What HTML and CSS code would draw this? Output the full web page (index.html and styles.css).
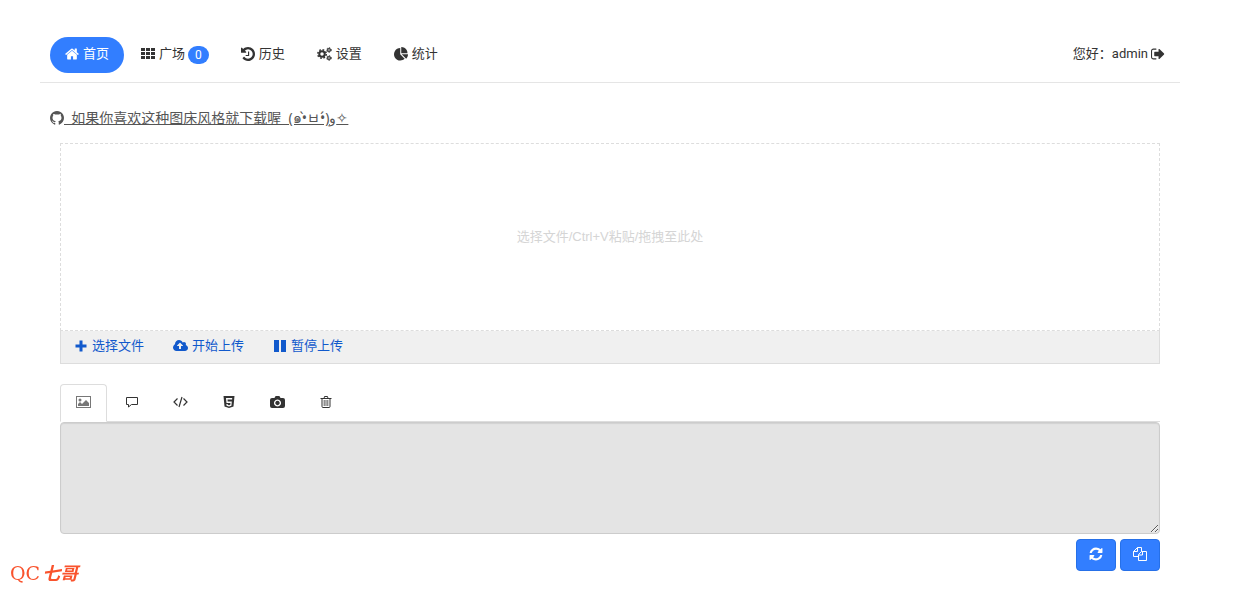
FILE: index.html
```
<!DOCTYPE html>
<html lang="zh-CN">
<head>
    <meta charset="UTF-8">
    <meta name="viewport" content="width=device-width, initial-scale=1.0">
    <title>首页</title>
    <link rel="stylesheet" href="styles.css">
</head>
<body>
    <div class="container">
        <!-- 顶部导航 -->
        <header class="header">
            <nav class="nav">
                <a class="nav-link active" href="#">
                    <svg class="icon" viewBox="64 64 1664 1664"><path d="M1472 992v480q0 26-19 45t-45 19h-384v-384h-256v384h-384q-26 0-45-19t-19-45v-480q0-1 .5-3t.5-3l575-474 575 474q1 2 1 6zm223-69l-62 74q-8 9-21 11h-3q-13 0-21-7l-692-577-692 577q-12 8-24 7-13-2-21-11l-62-74q-8-10-7-23.500t11-21.500l719-599q32-26 76-26t76 26l244 204v-195q0-14 9-23t23-9h192q14 0 23 9t9 23v408l219 182q10 8 11 21.500t-7 23.500z"/></svg>
                    <span>首页</span>
                </a>
                <a class="nav-link" href="#">
                    <svg class="icon" viewBox="0 0 14 14"><path d="M0 1h4v3H0zM5 1h4v3H5zM10 1h4v3h-4zM0 5h4v3H0zM5 5h4v3H5zM10 5h4v3h-4zM0 9h4v3H0zM5 9h4v3H5zM10 9h4v3h-4z"/></svg>
                    <span>广场</span>
                    <span class="badge">0</span>
                </a>
                <a class="nav-link" href="#">
                    <svg class="icon" viewBox="128 128 1536 1536"><path d="M1664 896q0 156-61 298t-164 245-245 164-298 61q-172 0-327-72.500t-264-204.500q-7-10-6.500-22.500t8.500-20.500l137-138q10-9 25-9 16 2 23 12 73 95 179 147t225 52q104 0 198.500-40.500t163.500-109.500 109.500-163.500 40.500-198.500-40.500-198.500-109.500-163.500-163.500-109.500-198.500-40.500q-98 0-188 35.500t-160 101.500l137 138q31 30 14 69-17 40-59 40h-448q-26 0-45-19t-19-45v-448q0-42 40-59 39-17 69 14l130 129q107-101 244.500-156.500t284.500-55.500q156 0 298 61t245 164 164 245 61 298z"/><path d="M1024 640v448q0 14-9 23t-23 9h-320q-14 0-23-9t-9-23v-64q0-14 9-23t23-9h224v-352q0-14 9-23t23-9h64q14 0 23 9t9 23z"/></svg>
                    <span>历史</span>
                </a>
                <a class="nav-link" href="#">
                    <svg class="icon icon-wide" viewBox="0 0 30 28">
                        <g fill="none" stroke="currentColor">
                            <circle cx="10" cy="14" r="5.500" stroke-width="4"/>
                            <circle cx="10" cy="14" r="8.500" stroke-width="3" stroke-dasharray="3.500 3.176"/>
                            <circle cx="24" cy="6" r="2.800" stroke-width="2.500"/>
                            <circle cx="24" cy="6" r="4.600" stroke-width="2" stroke-dasharray="2.600 2.217"/>
                            <circle cx="24" cy="22" r="2.800" stroke-width="2.500"/>
                            <circle cx="24" cy="22" r="4.600" stroke-width="2" stroke-dasharray="2.600 2.217"/>
                        </g>
                    </svg>
                    <span>设置</span>
                </a>
                <a class="nav-link" href="#">
                    <svg class="icon" viewBox="0 0 1728 1728"><path d="M768 890l546 546q-106 108-247.500 168t-298.500 60q-209 0-385.500-103t-279.500-279.500-103-385.500 103-385.500 279.500-279.500 385.500-103v762zm187 6h773q0 157-60 298.500t-168 247.500zm709-128h-768v-768q209 0 385.500 103t279.500 279.500 103 385.500z"/></svg>
                    <span>统计</span>
                </a>
            </nav>
            <a class="nav-link" href="#">
                <span>您好：admin</span>
                <svg class="icon" viewBox="64 64 1664 1664"><path d="M704 1440q0 4 1 20t.5 26.500-3 23.500-10 19.500-20.500 6.500h-320q-119 0-203.500-84.500t-84.500-203.500v-704q0-119 84.500-203.500t203.500-84.500h320q13 0 22.500 9.500t9.500 22.500q0 4 1 20t.5 26.500-3 23.500-10 19.500-20.500 6.500h-320q-66 0-113 47t-47 113v704q0 66 47 113t113 47h312l11.500 1 11.500 3 8 5.500 7 9 2 13.500zm928-544q0 26-19 45l-544 544q-19 19-45 19t-45-19-19-45v-288h-448q-26 0-45-19t-19-45v-384q0-26 19-45t45-19h448v-288q0-26 19-45t45-19 45 19l544 544q19 19 19 45z"/></svg>
            </a>
        </header>

        <p class="notice">
            <a href="#"><svg class="icon" viewBox="128 128 1536 1536"><path d="M896 128q209 0 385.500 103t279.500 279.500 103 385.500q0 251-146.500 451.500t-378.500 277.500q-27 5-40-7t-13-30q0-3 .5-76.500t.5-134.500q0-97-52-142 57-6 102.500-18t94-39 81-66.500 53-105 20.500-150.500q0-119-79-206 37-91-8-204-28-9-81 11t-92 44l-38 24q-93-26-192-26t-192 26q-16-11-42.500-27t-83.500-38.500-85-13.500q-45 113-8 204-79 87-79 206 0 85 20.500 150t52.500 105 80.500 67 94 39 102.500 18q-39 36-49 103-21 10-45 15t-57 5-65.500-21.500-55.500-62.500q-19-32-48.500-52t-49.500-24l-20-3q-21 0-29 4.500t-5 11.500 9 14 13 12l7 5q22 10 43.500 38t31.500 51l10 23q13 38 44 61.500t67 30 69.500 7 55.500-3.500l23-4q0 38 .5 88.500t.5 54.500q0 18-13 30t-40 7q-232-77-378.500-277.500t-146.500-451.500q0-209 103-385.500t279.500-279.500 385.500-103z"/></svg>&nbsp;&nbsp;如果你喜欢这种图床风格就下载喔&nbsp;&nbsp;(๑•̀ㅂ•́)و✧</a>
        </p>

        <main class="main">
            <!-- 上传区域 -->
            <section class="uploader">
                <div class="dropzone">选择文件/Ctrl+V粘贴/拖拽至此处</div>
                <div class="toolbar">
                    <button type="button">
                        <svg class="icon" viewBox="0 0 14 14"><path d="M5.500 1.500h3v4h4v3h-4v4h-3v-4h-4v-3h4z"/></svg>
                        <span>选择文件</span>
                    </button>
                    <button type="button">
                        <svg class="icon icon-wide" viewBox="-64 0 1920 1792"><path d="M1216 864q0-14-9-23l-352-352q-9-9-23-9t-23 9l-351 351q-10 12-10 24 0 14 9 23t23 9h224v352q0 13 9.500 22.500t22.500 9.500h192q13 0 22.500-9.500t9.500-22.500v-352h224q13 0 22.500-9.500t9.500-22.500zm640 288q0 159-112.500 271.500t-271.500 112.500h-1088q-185 0-316.500-131.500t-131.500-316.500q0-130 70-240t188-165q-2-30-2-43 0-212 150-362t362-150q156 0 285.500 87t188.500 231q71-62 166-62 106 0 181 75t75 181q0 76-41 138 130 31 213.500 135.500t83.500 238.500z"/></svg>
                        <span>开始上传</span>
                    </button>
                    <button type="button">
                        <svg class="icon" viewBox="0 0 14 14"><path d="M1 1h5v12H1zM8 1h5v12H8z"/></svg>
                        <span>暂停上传</span>
                    </button>
                </div>
            </section>

            <!-- 链接格式 -->
            <nav class="tabs">
                <a class="tab active" href="#" aria-label="图片">
                    <svg class="icon icon-wide" viewBox="0 0 15 14"><path d="M0 1h15v12H0zm1 1v10h13V2z" fill-rule="evenodd"/><circle cx="4" cy="5" r="1.500"/><path d="M2 11V9l2-2 2 2 4-4 3 3v3z"/></svg>
                </a>
                <a class="tab" href="#" aria-label="论坛">
                    <svg class="icon" viewBox="0 0 14 14"><path d="M1.500 2.500h11v7H6.500L3.500 12V9.500h-2z" fill="none" stroke="currentColor" stroke-linejoin="round"/></svg>
                </a>
                <a class="tab" href="#" aria-label="代码">
                    <svg class="icon icon-wide" viewBox="0 0 15 14"><path d="M4.500 3.500L1 7l3.500 3.500M10.500 3.500L14 7l-3.500 3.500M9 2L6 12" fill="none" stroke="currentColor" stroke-width="1.200"/></svg>
                </a>
                <a class="tab" href="#" aria-label="HTML">
                    <svg class="icon" viewBox="0 0 14 14"><path d="M1.500 1h11l-1 10.500L7 13l-4.500-1.500zM4 3l.5 5h4l-.2 1.700L7 10.200l-1.300-.5L5.600 9H4.400l.2 1.700L7 11.500l2.400-.8.4-4.100H5.700l-.2-2h4.600L10.200 3z" fill-rule="evenodd"/></svg>
                </a>
                <a class="tab" href="#" aria-label="截图">
                    <svg class="icon icon-wide" viewBox="0 0 15 14"><path d="M2 3h2.500l.7-1.500Q5.500 1 6 1h3q.5 0 .8.500l.7 1.500H13q2 0 2 2v6q0 2-2 2H2q-2 0-2-2V5q0-2 2-2zm5.500 1.500a3.500 3.500 0 1 0 .01 0zm0 1.300a2.200 2.200 0 1 1-.01 0z" fill-rule="evenodd"/></svg>
                </a>
                <a class="tab" href="#" aria-label="删除">
                    <svg class="icon" viewBox="0 0 14 14"><path d="M1.500 3.500h11M5 3.500l.5-2h3l.5 2M3 3.500v8q0 1 1 1h6q1 0 1-1v-8" fill="none" stroke="currentColor"/><path d="M5.200 5v6M7 5v6M8.800 5v6" fill="none" stroke="currentColor" stroke-width=".8"/></svg>
                </a>
            </nav>
            <textarea class="links" aria-label="链接" readonly></textarea>

            <div class="actions">
                <button type="button" aria-label="刷新">
                    <svg class="icon" viewBox="64 64 1664 1664"><path d="M1639 1056q0 5-1 7-64 268-268 434.500t-478 166.500q-146 0-282.500-55t-243.500-157l-129 129q-19 19-45 19t-45-19-19-45v-448q0-26 19-45t45-19h448q26 0 45 19t19 45-19 45l-137 137q71 66 161 102t187 36q134 0 250-65t186-179q11-17 53-117 8-23 30-23h192q13 0 22.500 9.500t9.500 22.500zm25-800v448q0 26-19 45t-45 19h-448q-26 0-45-19t-19-45 19-45l138-138q-148-137-349-137-134 0-250 65t-186 179q-11 17-53 117-8 23-30 23h-199q-13 0-22.500-9.500t-9.500-22.500v-7q65-268 270-434.500t480-166.500q146 0 284 55.500t245 156.500l130-129q19-19 45-19t45 19 19 45z"/></svg>
                </button>
                <button type="button" aria-label="复制">
                    <svg class="icon" viewBox="0 0 14 14"><path d="M5.500 9.500h-5v-5l4-4h4v4M4.500.5v4h-4M5.500 13.500v-6l3-3h5v9zM9.500 4.500v3.500h-4" fill="none" stroke="currentColor"/></svg>
                </button>
            </div>
        </main>
    </div>

    <footer class="footer">QC<span>七哥</span></footer>
</body>
</html>
```

FILE: styles.css
```
body {
    margin: 0;
    padding: 28px 22px 0 0;
    background-color: #fff;
    color: #333;
    font-family: Roboto, "Noto Sans CJK SC", sans-serif;
    font-size: 13px;
    line-height: 20px;
}
a {
    color: inherit;
    text-decoration: none;
}
button {
    font: inherit;
    cursor: pointer;
}
.container {
    max-width: 1140px;
    margin: 0 auto;
}
.icon {
    width: 14px;
    height: 14px;
    flex: none;
    fill: currentColor;
}
.icon-wide {
    width: 15px;
}
/* 导航 */
.header {
    display: flex;
    justify-content: space-between;
    padding: 9px 0 9px 10px;
    border-bottom: 1px solid #e5e5e5;
}
.nav {
    display: flex;
    gap: 2px;
}
.nav-link {
    display: flex;
    align-items: center;
    gap: 3px;
    height: 34px;
    padding: 0 15px 2px;
    border-radius: 18px;
}
.nav .nav-link {
    gap: 4px;
}
.nav-link.active {
    background-color: #327eff;
    color: #fff;
}
.badge {
    padding: 0 7px;
    margin: 2px 0 0 -1px;
    border-radius: 10px;
    background-color: #327eff;
    color: #fff;
    font-size: 12px;
    line-height: 18px;
}
.notice {
    margin: 24px 10px 14px;
    color: #555;
    font-family: "Noto Sans", "Noto Sans CJK SC", sans-serif;
    font-size: 14px;
    line-height: 22px;
}
.notice a {
    text-decoration: underline;
}
.notice .icon {
    vertical-align: -2px;
}
.main {
    padding: 0 20px;
}
/* 上传区域 */
.dropzone {
    display: flex;
    align-items: center;
    justify-content: center;
    height: 186px;
    border: 1px dashed #ddd;
    color: #d5d5d5;
    font-family: "Liberation Sans", "Noto Sans CJK SC", sans-serif;
}
.toolbar {
    display: flex;
    height: 32px;
    border: 1px solid #ddd;
    border-top: 0;
    background-color: #f0f0f0;
}
.toolbar button {
    display: flex;
    align-items: center;
    gap: 4px;
    padding: 0 16px 2px 13px;
    border: 0;
    background: none;
    color: #1159cc;
}
/* 标签页 */
.tabs {
    display: flex;
    gap: 2px;
    margin-top: 20px;
    border-bottom: 1px solid #ddd;
}
.tab {
    display: flex;
    align-items: center;
    height: 34px;
    margin-bottom: -1px;
    padding: 0 15px 2px;
    border: 1px solid transparent;
    border-radius: 4px 4px 0 0;
}
.tab.active {
    border-color: #ddd;
    border-bottom-color: #fff;
    color: #777;
}
.links {
    display: block;
    box-sizing: border-box;
    width: 100%;
    height: 112px;
    padding: 6px 12px;
    border: 1px solid #ccc;
    border-radius: 4px;
    background-color: #e4e4e4;
    box-shadow: inset 0 1px 1px rgba(0, 0, 0, 0.08);
    outline: 0;
    resize: vertical;
}
.actions {
    display: flex;
    justify-content: flex-end;
    gap: 4px;
    margin-top: 5px;
}
.actions button {
    display: flex;
    align-items: center;
    justify-content: center;
    width: 40px;
    height: 32px;
    padding: 0 0 2px;
    border: 1px solid #2670e8;
    border-radius: 4px;
    background-color: #327eff;
    color: #fff;
}
.footer {
    position: fixed;
    bottom: 12px;
    left: 10px;
    color: #f9532d;
    font-family: "DejaVu Serif", "Noto Sans CJK SC", serif;
    font-size: 19px;
    line-height: 22px;
}
.footer span {
    margin-left: 2px;
    font-size: 18px;
    font-style: italic;
    font-weight: bold;
}
```
